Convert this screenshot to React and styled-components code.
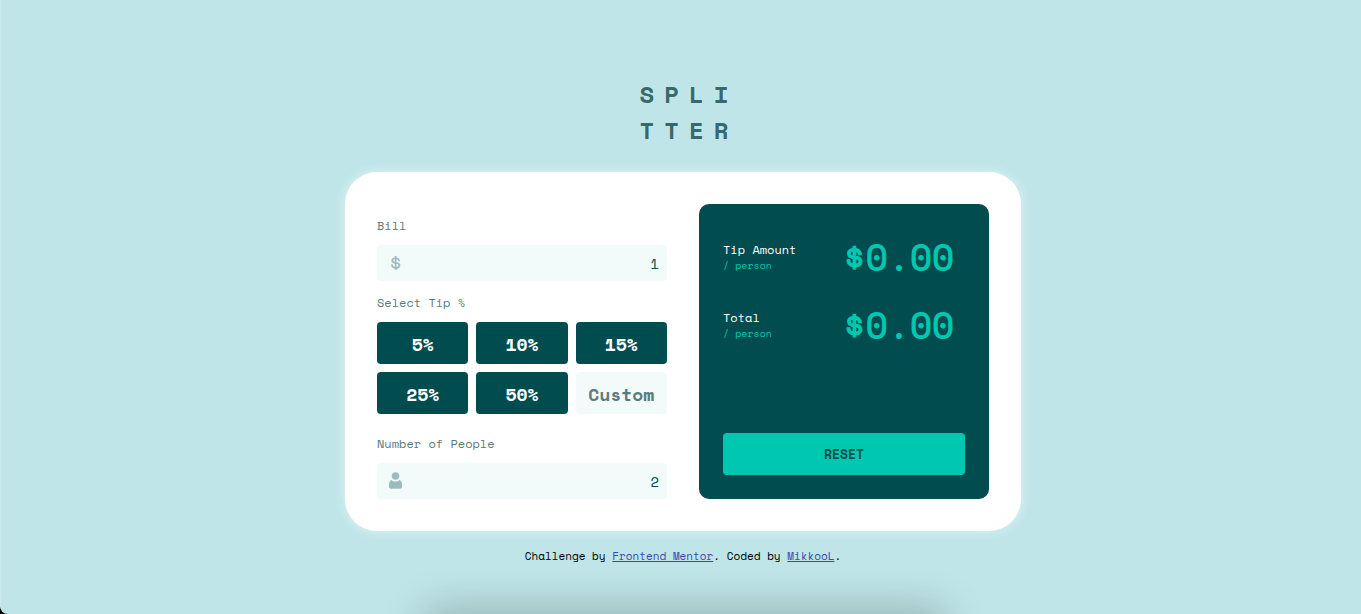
import React, { useState } from "react";
import styled, { createGlobalStyle } from "styled-components";

const c = {
  page: "#bfe5e8",
  dark: "#004c4f",
  cyan: "#00c8b0",
  field: "#f2fbfa",
  label: "#5a7b7c",
  icon: "#9bbcbf",
  title: "#38696a",
};

const GlobalStyle = createGlobalStyle`
  *, *::before, *::after { box-sizing: border-box; }
  html { background: #000; }
  body { margin: 0; }
  body, button, input { font-family: "Space Mono", "Liberation Mono", monospace; }
`;

const Page = styled.div`
  position: relative;
  min-height: 100vh;
  padding: 76px 0 24px 4px;
  display: flex;
  flex-direction: column;
  align-items: center;
  overflow: hidden;
  background: ${c.page};
  border-left: 1px solid #cdebee;
  border-bottom-left-radius: 8px;
`;

const DockShadow = styled.div`
  position: absolute;
  bottom: -26px;
  left: 50%;
  width: 504px;
  height: 20px;
  margin-left: -248px;
  border-radius: 10px;
  box-shadow: 0 0 40px 14px rgba(0, 0, 0, 0.2);
  pointer-events: none;
`;

const Title = styled.h1`
  margin: 0 0 24px;
  padding-left: 12px;
  font-size: 24px;
  line-height: 36px;
  font-weight: 700;
  letter-spacing: 10px;
  color: ${c.title};
`;

const Card = styled.main`
  width: 100%;
  max-width: 676px;
  padding: 32px;
  display: grid;
  grid-template-columns: 1fr 1fr;
  gap: 32px;
  background: #fff;
  border-radius: 32px;
  box-shadow: 0 0 12px rgba(255, 255, 255, 0.55);
`;

const Form = styled.form`
  display: flex;
  flex-direction: column;
  gap: 12px;
  padding-top: 12px;
`;

const Field = styled.div`
  display: flex;
  flex-direction: column;
`;

const Label = styled.label`
  margin-bottom: 9px;
  font-size: 12px;
  line-height: 20px;
  color: ${c.label};
`;

const InputBox = styled.div`
  display: flex;
  align-items: center;
  height: 36px;
  padding: 0 8px 0 12px;
  background: ${c.field};
  border-radius: 4px;
  color: ${c.icon};
`;

const FieldSign = styled.span`
  font-size: 22px;
  line-height: 36px;
`;

const Input = styled.input`
  flex: 1;
  min-width: 0;
  padding: 2px 0 0;
  border: 0;
  outline: 0;
  background: transparent;
  color: ${c.dark};
  font-size: 14px;
  line-height: 20px;
  text-align: right;
`;

const TipGroup = styled.fieldset`
  min-width: 0;
  margin: 0 0 8px;
  padding: 0;
  border: 0;
`;

const Legend = styled.legend`
  padding: 0 0 9px;
  font-size: 12px;
  line-height: 20px;
  color: ${c.label};
`;

const Tips = styled.div`
  display: grid;
  grid-template-columns: repeat(3, 1fr);
  gap: 8px;
`;

const TipButton = styled.button`
  height: 42px;
  padding: 1px 0 0;
  border: 0;
  border-radius: 4px;
  background: ${c.dark};
  color: #fff;
  font-size: 18px;
  font-weight: 700;
  cursor: pointer;
`;

const CustomInput = styled.input`
  width: 100%;
  height: 42px;
  padding: 1px 0 0;
  border: 0;
  border-radius: 4px;
  background: ${c.field};
  color: ${c.dark};
  font-size: 18px;
  font-weight: 700;
  text-align: center;
  &::placeholder {
    color: ${c.label};
    opacity: 1;
  }
`;

const Panel = styled.section`
  display: flex;
  flex-direction: column;
  gap: 24px;
  padding: 31px 24px 24px;
  background: ${c.dark};
  border-radius: 10px;
`;

const Row = styled.div`
  display: flex;
  align-items: center;
  justify-content: space-between;
  height: 44px;
  padding-right: 11px;
`;

const RowName = styled.div`
  font-size: 12px;
  line-height: 18px;
  color: #fff;
`;

const PerPerson = styled.div`
  font-size: 10px;
  line-height: 14px;
  color: ${c.cyan};
`;

const Amount = styled.output`
  font-size: 36px;
  line-height: 44px;
  color: ${c.cyan};
  -webkit-text-stroke: 1px currentColor;
`;

const Reset = styled.button`
  height: 42px;
  margin-top: auto;
  border: 0;
  border-radius: 4px;
  background: ${c.cyan};
  color: ${c.dark};
  font-size: 13px;
  font-weight: 700;
  cursor: pointer;
`;

const Footer = styled.footer`
  margin-top: 16px;
  font-size: 11px;
  line-height: 18px;
  color: #000;
`;

const Link = styled.a`
  color: #3e46a8;
`;

function PersonIcon() {
  return (
    <svg width="13" height="18" viewBox="0 0 13 18" fill="currentColor" aria-hidden="true">
      <circle cx="6.5" cy="4" r="3.8" />
      <path d="M2.6 7.9C1 8.5 0 10.2 0 12.3V14.8C0 16 .8 16.7 2 16.7H11C12.2 16.7 13 16 13 14.8V12.3C13 10.2 12 8.5 10.4 7.9C9.4 9 8 9.5 6.5 9.5S3.6 9 2.6 7.9Z" />
    </svg>
  );
}

function Result({ name }) {
  return (
    <Row>
      <RowName>
        {name}
        <PerPerson>/ person</PerPerson>
      </RowName>
      <Amount aria-label={name}>$0.00</Amount>
    </Row>
  );
}

export default function App() {
  const [bill, setBill] = useState("1");
  const [people, setPeople] = useState("2");
  const [custom, setCustom] = useState("");

  const reset = () => {
    setBill("1");
    setPeople("2");
    setCustom("");
  };

  return (
    <Page>
      <GlobalStyle />
      <Title>
        SPLI
        <br />
        TTER
      </Title>
      <Card>
        <Form onSubmit={(e) => e.preventDefault()}>
          <Field>
            <Label htmlFor="bill">Bill</Label>
            <InputBox>
              <FieldSign>$</FieldSign>
              <Input id="bill" inputMode="decimal" value={bill} onChange={(e) => setBill(e.target.value)} />
            </InputBox>
          </Field>
          <TipGroup>
            <Legend>Select Tip %</Legend>
            <Tips>
              {[5, 10, 15, 25, 50].map((tip) => (
                <TipButton key={tip} type="button">{`${tip}%`}</TipButton>
              ))}
              <CustomInput
                aria-label="Custom tip"
                placeholder="Custom"
                value={custom}
                onChange={(e) => setCustom(e.target.value)}
              />
            </Tips>
          </TipGroup>
          <Field>
            <Label htmlFor="people">Number of People</Label>
            <InputBox>
              <PersonIcon />
              <Input id="people" inputMode="numeric" value={people} onChange={(e) => setPeople(e.target.value)} />
            </InputBox>
          </Field>
        </Form>
        <Panel>
          <Result name="Tip Amount" />
          <Result name="Total" />
          <Reset type="button" onClick={reset}>RESET</Reset>
        </Panel>
      </Card>
      <Footer>
        Challenge by <Link href="#mentor">Frontend Mentor</Link>. Coded by <Link href="#author">MikkooL</Link>.
      </Footer>
      <DockShadow />
    </Page>
  );
}
